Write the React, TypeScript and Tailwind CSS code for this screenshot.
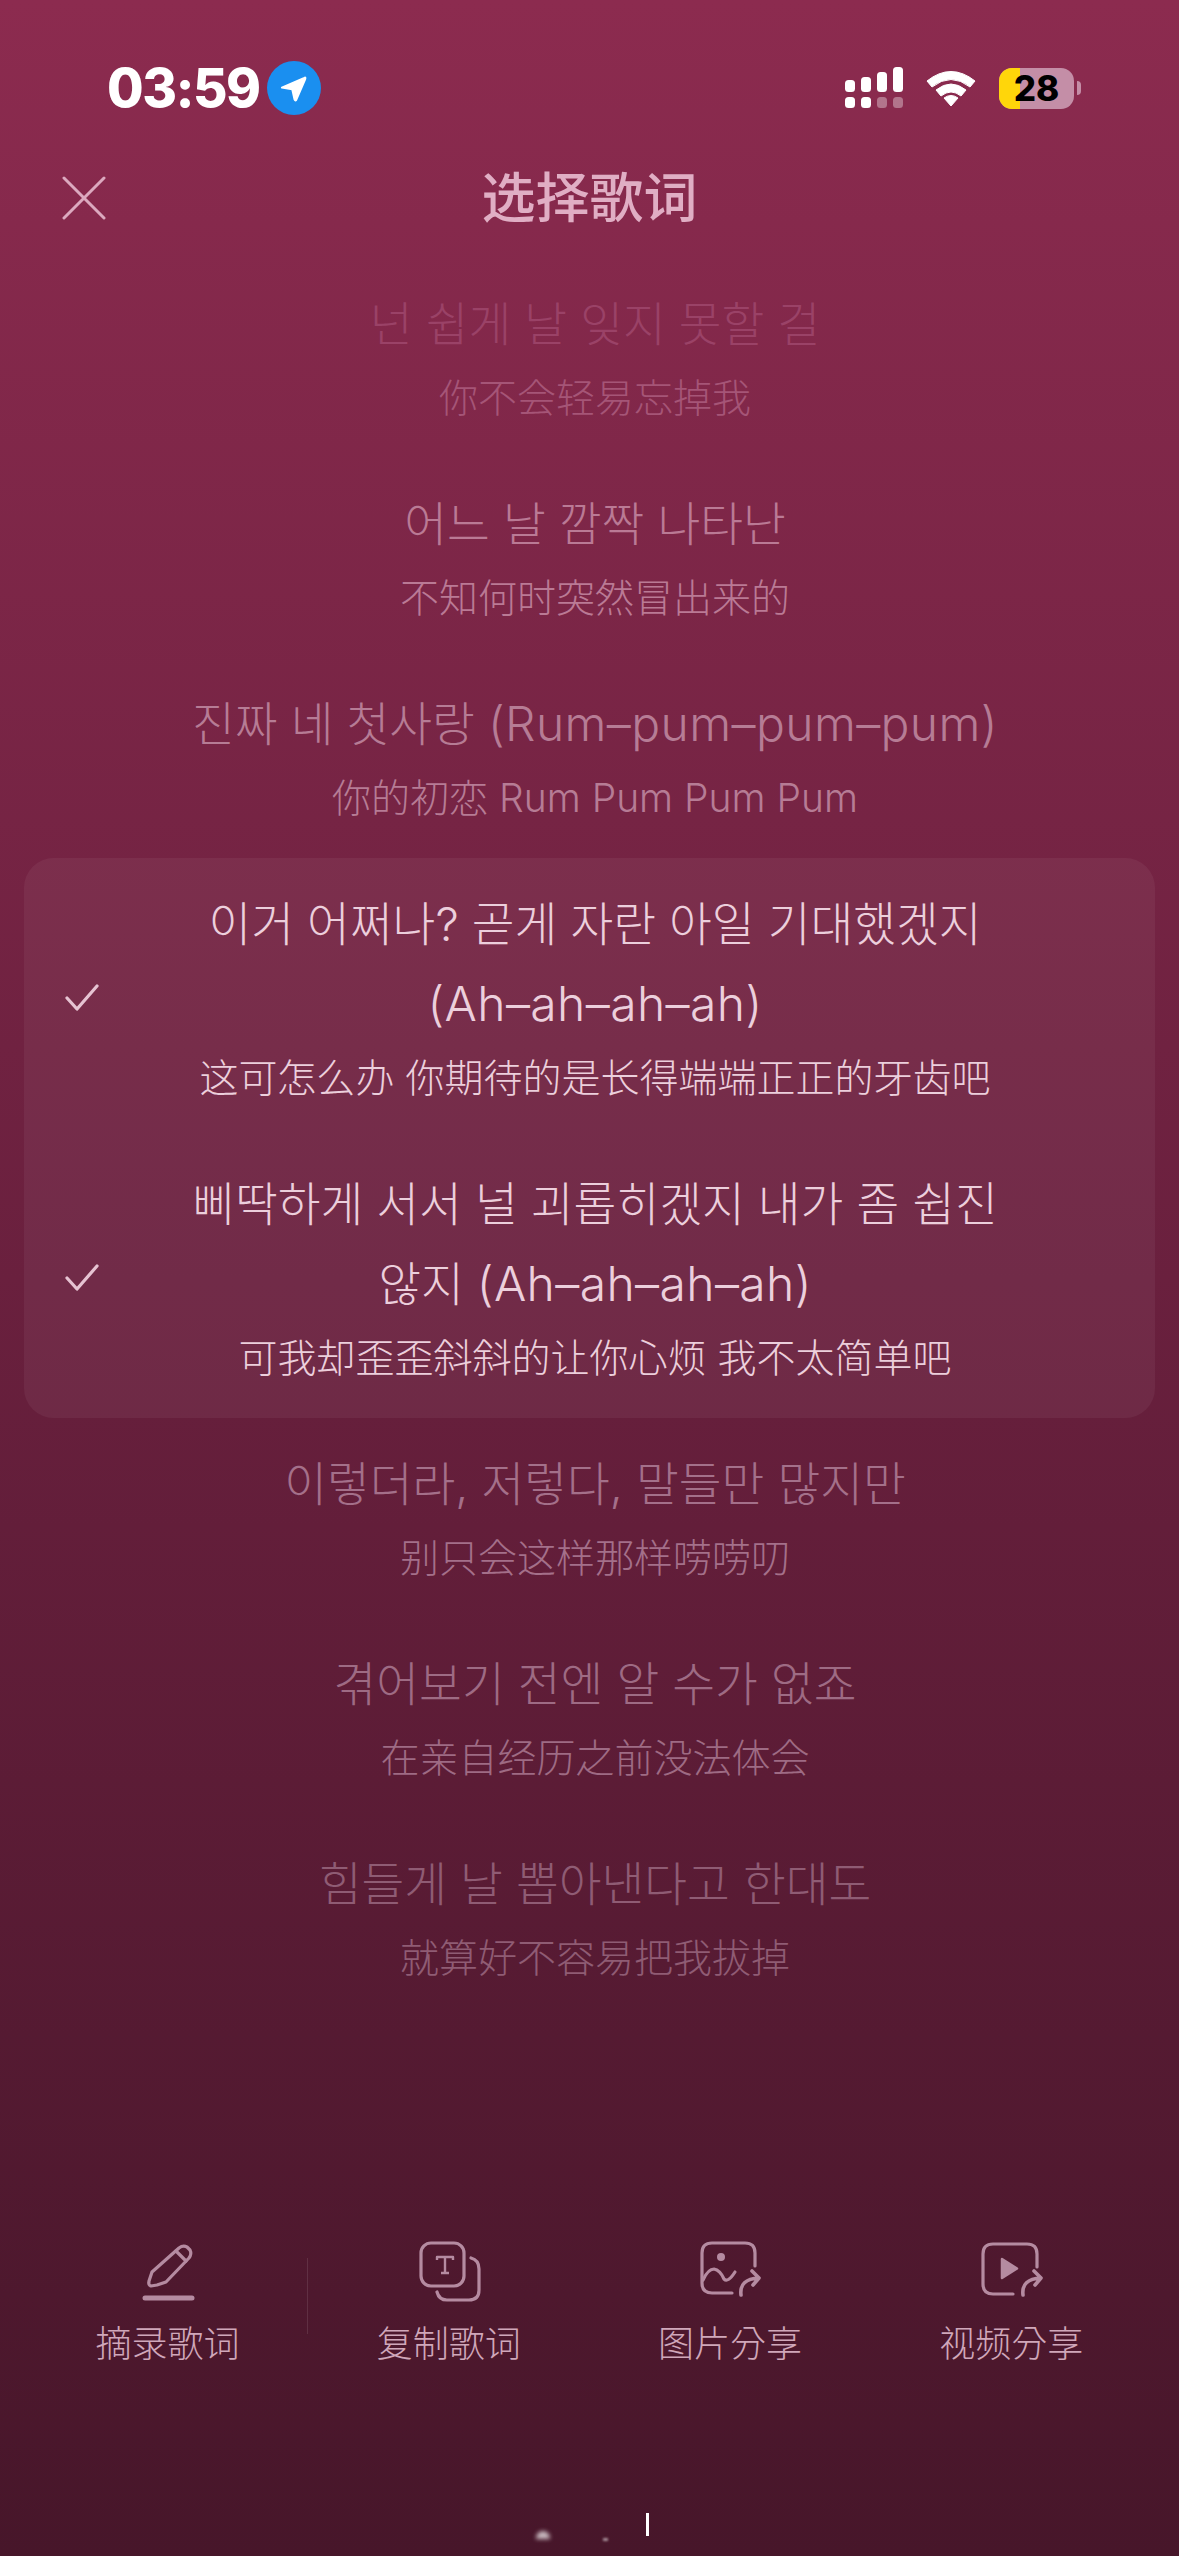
const cjk = "font-['Inter','Noto_Sans_CJK_KR','Noto_Sans_CJK_SC',sans-serif] font-light";

type Row = { ko: string[]; zh: string; koC: string; zhC: string };

const before: Row[] = [
  { ko: ["넌 쉽게 날 잊지 못할 걸"], zh: "你不会轻易忘掉我", koC: "text-[#9a4267]", zhC: "text-[#a55577]" },
  { ko: ["어느 날 깜짝 나타난"], zh: "不知何时突然冒出来的", koC: "text-[#ba7a95]", zhC: "text-[#ba7a95]" },
  { ko: ["진짜 네 첫사랑 (Rum–pum–pum–pum)"], zh: "你的初恋 Rum Pum Pum Pum", koC: "text-[#b67c95]", zhC: "text-[#b67c95]" },
];
const selected: Row[] = [
  { ko: ["이거 어쩌나? 곧게 자란 아일 기대했겠지", "(Ah–ah–ah–ah)"], zh: "这可怎么办 你期待的是长得端端正正的牙齿吧", koC: "text-[#eccfdc]", zhC: "text-[#eccfdc]" },
  { ko: ["삐딱하게 서서 널 괴롭히겠지 내가 좀 쉽진", "않지 (Ah–ah–ah–ah)"], zh: "可我却歪歪斜斜的让你心烦 我不太简单吧", koC: "text-[#eccfdc]", zhC: "text-[#eccfdc]" },
];
const after: Row[] = [
  { ko: ["이렇더라, 저렇다, 말들만 많지만"], zh: "别只会这样那样唠唠叨", koC: "text-[#a4708a]", zhC: "text-[#a4708a]" },
  { ko: ["겪어보기 전엔 알 수가 없죠"], zh: "在亲自经历之前没法体会", koC: "text-[#9e6b84]", zhC: "text-[#9e6b84]" },
  { ko: ["힘들게 날 뽑아낸다고 한대도"], zh: "就算好不容易把我拔掉", koC: "text-[#8f5c74]", zhC: "text-[#8f5c74]" },
];

function KoLine({ text }: { text: string }) {
  const parts = text.split(/(\([^)]*\))/);
  return (
    <>
      {parts.map((p, i) =>
        p.startsWith("(") ? (
          <span key={i} className="text-[48px] tracking-[0.4px]">{p}</span>
        ) : (
          <span key={i}>{p}</span>
        )
      )}
    </>
  );
}

function Lyric({ row, check }: { row: Row; check?: boolean }) {
  return (
    <div className="relative flex flex-col items-center py-[27px] pl-[11px]">
      {check && (
        <svg className="absolute left-[65px] top-1/2 -translate-y-1/2" width="34" height="28" viewBox="0 0 34 28" fill="none">
          <path d="M2 14 L12 25 L32 2" stroke="#e6c3d2" strokeWidth="3.2" strokeLinecap="round" strokeLinejoin="round" />
        </svg>
      )}
      {row.ko.map((l) => (
        <div key={l} className={`h-[80px] whitespace-nowrap text-[46.5px] leading-[78px] ${row.koC}`}><KoLine text={l} /></div>
      ))}
      <div className={`h-[66px] whitespace-nowrap text-[39px] leading-[66px] ${row.zhC}`}>{row.zh}</div>
    </div>
  );
}

function Pencil() {
  return (
    <svg width="80" height="70" viewBox="0 0 80 70" fill="none" stroke="#b58ba1" strokeWidth="3.2" strokeLinecap="round" strokeLinejoin="round">
      <path d="M23 50 Q20 49 21 45 L24 36 L51 12 Q55 9 59 11 L62 14 Q64 18 61 22 L38 46 L29 49 Z" />
      <path d="M48 15 L58 25" />
      <path d="M17 62 H64" strokeWidth="5" />
    </svg>
  );
}
function Copy() {
  return (
    <svg width="80" height="70" viewBox="0 0 80 70" fill="none" stroke="#b58ba1" strokeWidth="3.2" strokeLinecap="round" strokeLinejoin="round">
      <rect x="12" y="7" width="43" height="43" rx="10" />
      <path d="M62 22 Q70 24 70 33 V54 Q70 64 60 64 H38 Q30 64 28 56" />
      <path d="M28 24 V21 H44 V24 M36 21 V37 M32 37 H40" strokeWidth="2.4" strokeLinecap="butt" />
    </svg>
  );
}
function ImageShare() {
  return (
    <svg width="80" height="70" viewBox="0 0 80 70" fill="none" stroke="#b58ba1" strokeWidth="3.2" strokeLinecap="round" strokeLinejoin="round">
      <path d="M65 30 V17 Q65 7 55 7 H22 Q12 7 12 17 V47 Q12 57 22 57 H42" />
      <circle cx="31" cy="21" r="4" fill="#b58ba1" stroke="none" />
      <path d="M13 44 Q18 33 24 33 Q30 34 34 43 Q38 47 45 36" />
      <path d="M51 59 Q49 43 69 42 M62 35 L69 42 L63 49" strokeWidth="3.6" />
    </svg>
  );
}
function VideoShare() {
  return (
    <svg width="80" height="70" viewBox="0 0 80 70" fill="none" stroke="#b58ba1" strokeWidth="3.2" strokeLinecap="round" strokeLinejoin="round">
      <path d="M66 31 V18 Q66 8 56 8 H22 Q12 8 12 18 V48 Q12 58 22 58 H42" />
      <path d="M31 23 L46 32.5 L31 42 Z" fill="#b58ba1" stroke="#b58ba1" strokeWidth="2.5" />
      <path d="M52 59 Q50 43 70 42 M63 35 L70 42 L64 49" strokeWidth="3.6" />
    </svg>
  );
}

const tools = [
  { label: "摘录歌词", Icon: Pencil },
  { label: "复制歌词", Icon: Copy },
  { label: "图片分享", Icon: ImageShare },
  { label: "视频分享", Icon: VideoShare },
];

export default function App() {
  return (
    <div className={`relative flex h-[2556px] w-[1179px] flex-col overflow-hidden bg-gradient-to-b from-[#8c2b4f] via-[#6a203e] to-[#47162a] ${cjk}`}>
      {/* status bar */}
      <div className="flex h-[140px] items-start justify-between pl-[107px] pr-[98px] pt-[61px]">
        <div className="flex items-center gap-[7px]">
          <span className="font-['Inter',sans-serif] text-[53px] font-extrabold leading-[54px] tracking-[-1.4px] text-white">03:59</span>
          <span className="flex h-[54px] w-[54px] items-center justify-center rounded-full bg-[#1a8ff0]">
            <svg width="27" height="27" viewBox="0 0 30 30"><path d="M2 14 L27 3 Q29 2 28 5 L18 28 Q17 29 16 27 L13.5 16 Z" fill="#fff" stroke="#fff" strokeWidth="2" strokeLinejoin="round" /></svg>
          </span>
        </div>
        <div className="flex items-center gap-[23px] pt-[6px]">
          <svg width="58" height="42" viewBox="0 0 58 42" className="block">
            <g fill="#fff">
              <rect x="0" y="13" width="10" height="12" rx="3.5" />
              <rect x="16" y="10" width="10" height="15" rx="3.5" />
              <rect x="32" y="5" width="10" height="20" rx="3.5" />
              <rect x="48" y="0" width="10" height="25" rx="3.5" />
              <rect x="0" y="30" width="10" height="11" rx="3.5" />
              <rect x="16" y="30" width="10" height="11" rx="3.5" />
            </g>
            <g fill="#fff" opacity="0.35">
              <rect x="32" y="30" width="10" height="11" rx="3.5" />
              <rect x="48" y="30" width="10" height="11" rx="3.5" />
            </g>
          </svg>
          <svg width="50" height="38" viewBox="0 0 50 38" className="block">
            <path d="M1 12 Q25 -7 49 12 L44 18 Q25 3 6 18 Z" fill="#fff" stroke="#fff" strokeWidth="1" strokeLinejoin="round" />
            <path d="M10 21 Q25 9 40 21 L35 27 Q25 19 15 27 Z" fill="#fff" stroke="#fff" strokeWidth="1" strokeLinejoin="round" />
            <path d="M18 29 Q25 24 32 29 L25 37 Z" fill="#fff" stroke="#fff" strokeWidth="1" strokeLinejoin="round" />
          </svg>
          <div className="flex items-center gap-[3px]">
            <div className="relative flex h-[41px] w-[75px] items-center justify-center overflow-hidden rounded-[13px] bg-[#c48ea7]">
              <div className="absolute inset-y-0 left-0 w-[21px] bg-[#ffd60a]" />
              <span className="relative font-['Inter',sans-serif] text-[35px] font-extrabold leading-none text-black">28</span>
            </div>
            <div className="h-[14px] w-[4px] rounded-r-full bg-[#c48ea7]" />
          </div>
        </div>
      </div>

      {/* header */}
      <div className="relative flex h-[118px] items-center justify-center">
        <svg className="absolute left-[62px] top-[36px]" width="44" height="44" viewBox="0 0 44 44" fill="none">
          <path d="M2 2 L42 42 M42 2 L2 42" stroke="#dca9bf" strokeWidth="3" strokeLinecap="round" />
        </svg>
        <span className="text-[54px] font-medium leading-[60px] text-[#e0aec4]">选择歌词</span>
      </div>

      {/* lyrics */}
      <div className="flex flex-col">
        {before.map((r) => <Lyric key={r.zh} row={r} />)}
        <div className="mx-[24px] rounded-[30px] bg-white/[0.05]">
          {selected.map((r) => (
            <div key={r.zh} className="-mx-[24px]"><Lyric row={r} check /></div>
          ))}
        </div>
        {after.map((r) => <Lyric key={r.zh} row={r} />)}
      </div>

      {/* toolbar */}
      <div className="mt-auto grid grid-cols-4 px-[27px] pb-[187px]">
        {tools.map(({ label, Icon }, i) => (
          <div key={label} className="relative flex flex-col items-center gap-[13px]">
            <Icon />
            <span className="text-[36px] leading-[50px] text-[#d0a7ba]">{label}</span>
            {i === 0 && <div className="absolute right-0 top-[22px] h-[76px] w-px bg-white/10" />}
          </div>
        ))}
      </div>

      {/* capture artefact at the bottom edge */}
      <div className="absolute left-[646px] top-[2513px] h-[23px] w-[3px] bg-white" />
      <div className="absolute left-[536px] top-[2531px] h-[8px] w-[14px] rounded-t-full bg-white/70 blur-[2px]" />
      <div className="absolute left-[603px] top-[2538px] h-[3px] w-[5px] bg-white/50 blur-[1px]" />
    </div>
  );
}
